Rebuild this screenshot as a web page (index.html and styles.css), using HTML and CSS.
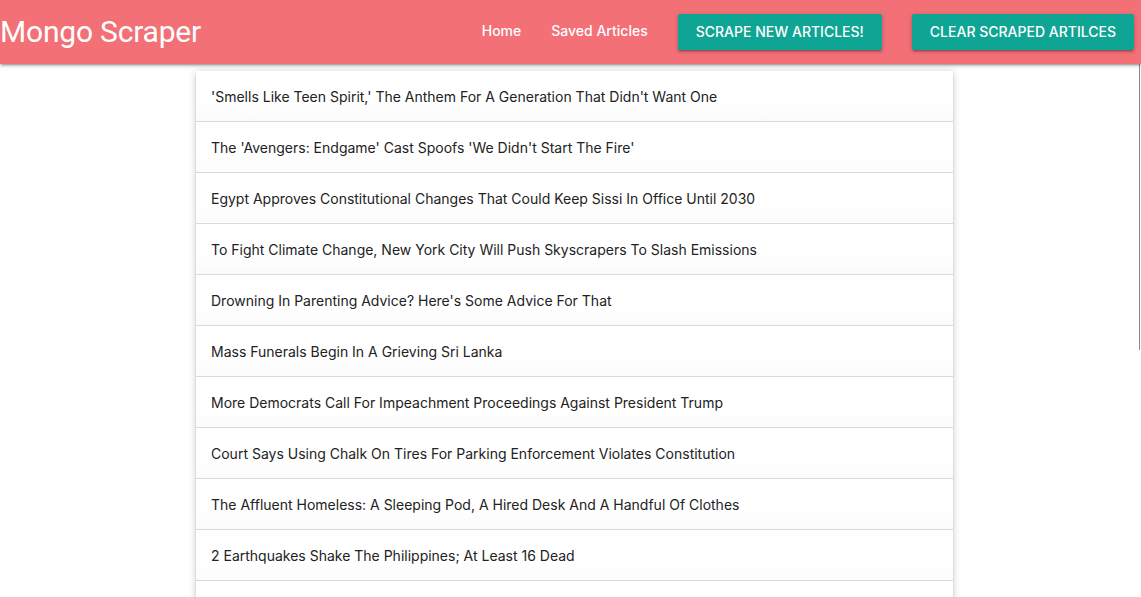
FILE: index.html
```html
<!DOCTYPE html>
<html lang="en">
<head>
<meta charset="utf-8">
<title>Mongo Scraper</title>
<link rel="stylesheet" href="styles.css">
</head>
<body>
<nav class="navbar">
  <a class="brand" href="#">Mongo Scraper</a>
  <ul class="nav-links">
    <li><a class="nav-link" href="#">Home</a></li>
    <li><a class="nav-link" href="#">Saved Articles</a></li>
    <li><a class="btn" href="#">Scrape New Articles!</a></li>
    <li><a class="btn" href="#">Clear Scraped Artilces</a></li>
  </ul>
</nav>
<main class="content">
  <ul class="collection">
    <li class="item">'Smells Like Teen Spirit,' The Anthem For A Generation That Didn't Want One</li>
    <li class="item">The 'Avengers: Endgame' Cast Spoofs 'We Didn't Start The Fire'</li>
    <li class="item">Egypt Approves Constitutional Changes That Could Keep Sissi In Office Until 2030</li>
    <li class="item">To Fight Climate Change, New York City Will Push Skyscrapers To Slash Emissions</li>
    <li class="item">Drowning In Parenting Advice? Here's Some Advice For That</li>
    <li class="item">Mass Funerals Begin In A Grieving Sri Lanka</li>
    <li class="item">More Democrats Call For Impeachment Proceedings Against President Trump</li>
    <li class="item">Court Says Using Chalk On Tires For Parking Enforcement Violates Constitution</li>
    <li class="item">The Affluent Homeless: A Sleeping Pod, A Hired Desk And A Handful Of Clothes</li>
    <li class="item">2 Earthquakes Shake The Philippines; At Least 16 Dead</li>
    <li class="item"></li>
  </ul>
</main>
<div class="scroll-thumb"></div>
</body>
</html>
```
FILE: styles.css
```css
* { box-sizing: border-box; }
html, body { margin: 0; padding: 0; }
body {
  font-family: Inter, Roboto, "Liberation Sans", sans-serif;
  background: #fff;
  color: #222;
  overflow: hidden;
  height: 597px;
}
.navbar {
  height: 64px;
  background: #f37077;
  display: flex;
  align-items: center;
  justify-content: space-between;
  box-shadow: 0 2px 2px 0 rgba(0,0,0,.14), 0 3px 1px -2px rgba(0,0,0,.12), 0 1px 5px 0 rgba(0,0,0,.2);
  position: relative;
  z-index: 2;
}
.brand {
  font-family: Roboto, "Liberation Sans", sans-serif;
  color: #fff;
  text-decoration: none;
  font-size: 30px;
  line-height: 64px;
  letter-spacing: -0.2px;
}
.nav-links {
  list-style: none;
  margin: 0;
  padding: 0 7px 0 0;
  display: flex;
  align-items: center;
  height: 64px;
}
.nav-links li { padding: 0 15px; }
.nav-links li:last-child { padding-right: 0; }
.nav-links li:first-child { padding-left: 0; }
.nav-link {
  display: block;
  line-height: 20px;
  padding-bottom: 2px;
  color: #fff;
  text-decoration: none;
  font-size: 14px;
  font-weight: 500;
}
.btn {
  display: inline-block;
  height: 36px;
  line-height: 36px;
  padding: 0 18px;
  background: #0fa594;
  color: #fff;
  text-decoration: none;
  text-transform: uppercase;
  font-size: 14px;
  font-weight: 500;
  border-radius: 2px;
  box-shadow: 0 2px 2px 0 rgba(0,0,0,.14), 0 3px 1px -2px rgba(0,0,0,.12), 0 1px 5px 0 rgba(0,0,0,.2);
}
.content {
  padding: 7px 0 0 196px;
}
.collection {
  list-style: none;
  margin: 0;
  padding: 0;
  width: 757px;
  background: #fff;
  box-shadow: 0 2px 2px 0 rgba(0,0,0,.14), 0 3px 1px -2px rgba(0,0,0,.12), 0 1px 8px 0 rgba(0,0,0,.2);
}
.item {
  height: 51px;
  line-height: 50px;
  padding: 1px 15px 0;
  border-bottom: 1px solid #d9d9d9;
  font-size: 14px;
  color: #222;
  white-space: nowrap;
  background: linear-gradient(to bottom, #fff 60%, #fbfbfb 100%);
}
.scroll-thumb {
  position: absolute;
  top: 64px;
  right: 1px;
  width: 1px;
  height: 286px;
  background: #8a8a8a;
}
```
